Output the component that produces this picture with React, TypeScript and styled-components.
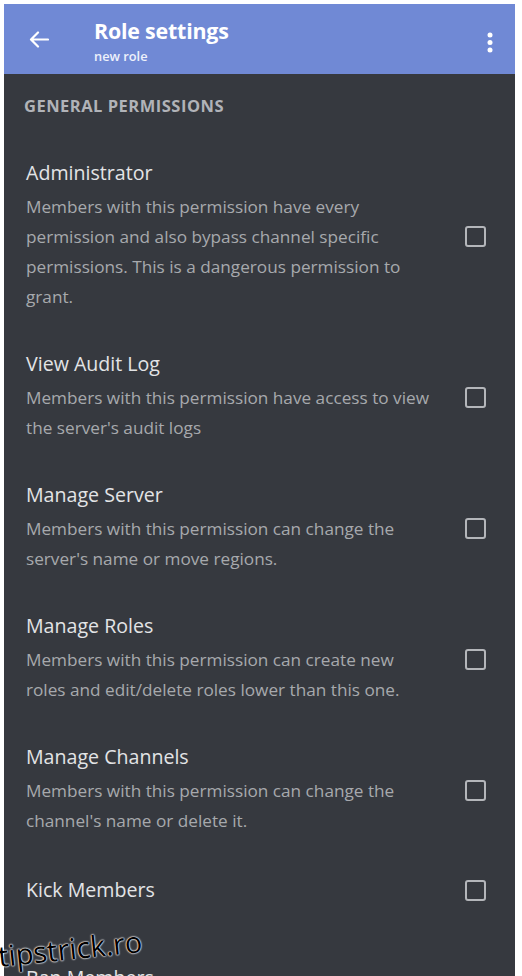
import styled, { createGlobalStyle } from "styled-components";

const GlobalStyle = createGlobalStyle`
  html, body {
    margin: 0;
    padding: 0;
    background: #fff;
    overflow: hidden;
  }
  * { box-sizing: border-box; }
`;

const Frame = styled.div`
  padding: 4px 7px 0 4px;
  height: 976px;
  position: relative;
  font-family: "Open Sans", "Noto Sans", sans-serif;
`;

const Screen = styled.div`
  height: 972px;
  background: #36393f;
  overflow: hidden;
`;

const Header = styled.header`
  height: 70px;
  background: #7089d5;
  display: flex;
  align-items: flex-start;
  padding: 14px 22px 0 25px;
`;

const BackButton = styled.div`
  width: 65px;
  padding-top: 13px;
  display: flex;
`;

const TitleBlock = styled.div`
  flex: 1;
  display: flex;
  flex-direction: column;
`;

const Title = styled.div`
  color: #fff;
  font-size: 21.4px;
  font-weight: 700;
  line-height: 26px;
  letter-spacing: -0.2px;
`;

const Subtitle = styled.div`
  color: #eef1fb;
  font-size: 12.8px;
  font-weight: 600;
  line-height: 16px;
  margin-top: 4px;
`;

const MenuButton = styled.div`
  padding-top: 14px;
  display: flex;
`;

const Section = styled.div`
  padding: 22px 29px 0 20px;
`;

const SectionLabel = styled.div`
  color: #b1b3b8;
  font-size: 16.5px;
  font-weight: 700;
  line-height: 20px;
  letter-spacing: 0.5px;
  text-transform: uppercase;
  margin-bottom: 25px;
`;

const Row = styled.div<{ $bare?: boolean }>`
  display: flex;
  align-items: center;
  padding: ${p => (p.$bare ? "22px 0 44px 2px" : "20px 0 20px 2px")};
`;

const RowText = styled.div`
  flex: 1;
  max-width: 408px;
`;

const RowTitle = styled.div`
  color: #e3e4e6;
  font-size: 19.6px;
  line-height: 24px;
`;

const RowDesc = styled.div`
  color: #a7a9ad;
  font-size: 17.2px;
  line-height: 30px;
  margin-top: 7px;
`;

const Checkbox = styled.div`
  margin-left: auto;
  width: 21px;
  height: 21px;
  flex-shrink: 0;
  border: 2.5px solid #b4b6ba;
  border-radius: 3px;
`;

const Watermark = styled.div`
  position: absolute;
  left: 0;
  top: 936px;
  font-family: "Open Sans", sans-serif;
  font-size: 29px;
  color: #000;
  transform: rotate(-6deg);
  transform-origin: left bottom;
  text-shadow: 0 0 2px #fff, 0 0 2px #fff, 0 0 1px #fff;
`;

const permissions = [
  {
    title: "Administrator",
    desc: "Members with this permission have every permission and also bypass channel specific permissions. This is a dangerous permission to grant.",
  },
  {
    title: "View Audit Log",
    desc: "Members with this permission have access to view the server's audit logs",
  },
  {
    title: "Manage Server",
    desc: "Members with this permission can change the server's name or move regions.",
  },
  {
    title: "Manage Roles",
    desc: "Members with this permission can create new roles and edit/delete roles lower than this one.",
  },
  {
    title: "Manage Channels",
    desc: "Members with this permission can change the channel's name or delete it.",
  },
  { title: "Kick Members", desc: "" },
  {
    title: "Ban Members",
    desc: "Members with this permission can ban members from the server.",
  },
];

export default function App() {
  return (
    <Frame>
      <GlobalStyle />
      <Screen>
        <Header>
          <BackButton>
            <svg width="20" height="17" viewBox="0 0 20 17" fill="none">
              <path d="M19 8.5H2.5M9 1.5L2 8.5L9 15.5" stroke="#fff" strokeWidth="2.2" strokeLinecap="round" strokeLinejoin="round" />
            </svg>
          </BackButton>
          <TitleBlock>
            <Title>Role settings</Title>
            <Subtitle>new role</Subtitle>
          </TitleBlock>
          <MenuButton>
            <svg width="6" height="22" viewBox="0 0 6 22">
              <circle cx="3" cy="3" r="2.5" fill="#fff" />
              <circle cx="3" cy="10.5" r="2.5" fill="#fff" />
              <circle cx="3" cy="18" r="2.5" fill="#fff" />
            </svg>
          </MenuButton>
        </Header>
        <Section>
          <SectionLabel>General Permissions</SectionLabel>
          {permissions.map((perm, index) => (
            <Row key={`perm-${index}`} $bare={!perm.desc}>
              <RowText>
                <RowTitle>{perm.title}</RowTitle>
                {perm.desc && <RowDesc>{perm.desc}</RowDesc>}
              </RowText>
              <Checkbox />
            </Row>
          ))}
        </Section>
      </Screen>
      <Watermark>tipstrick.ro</Watermark>
    </Frame>
  );
}
